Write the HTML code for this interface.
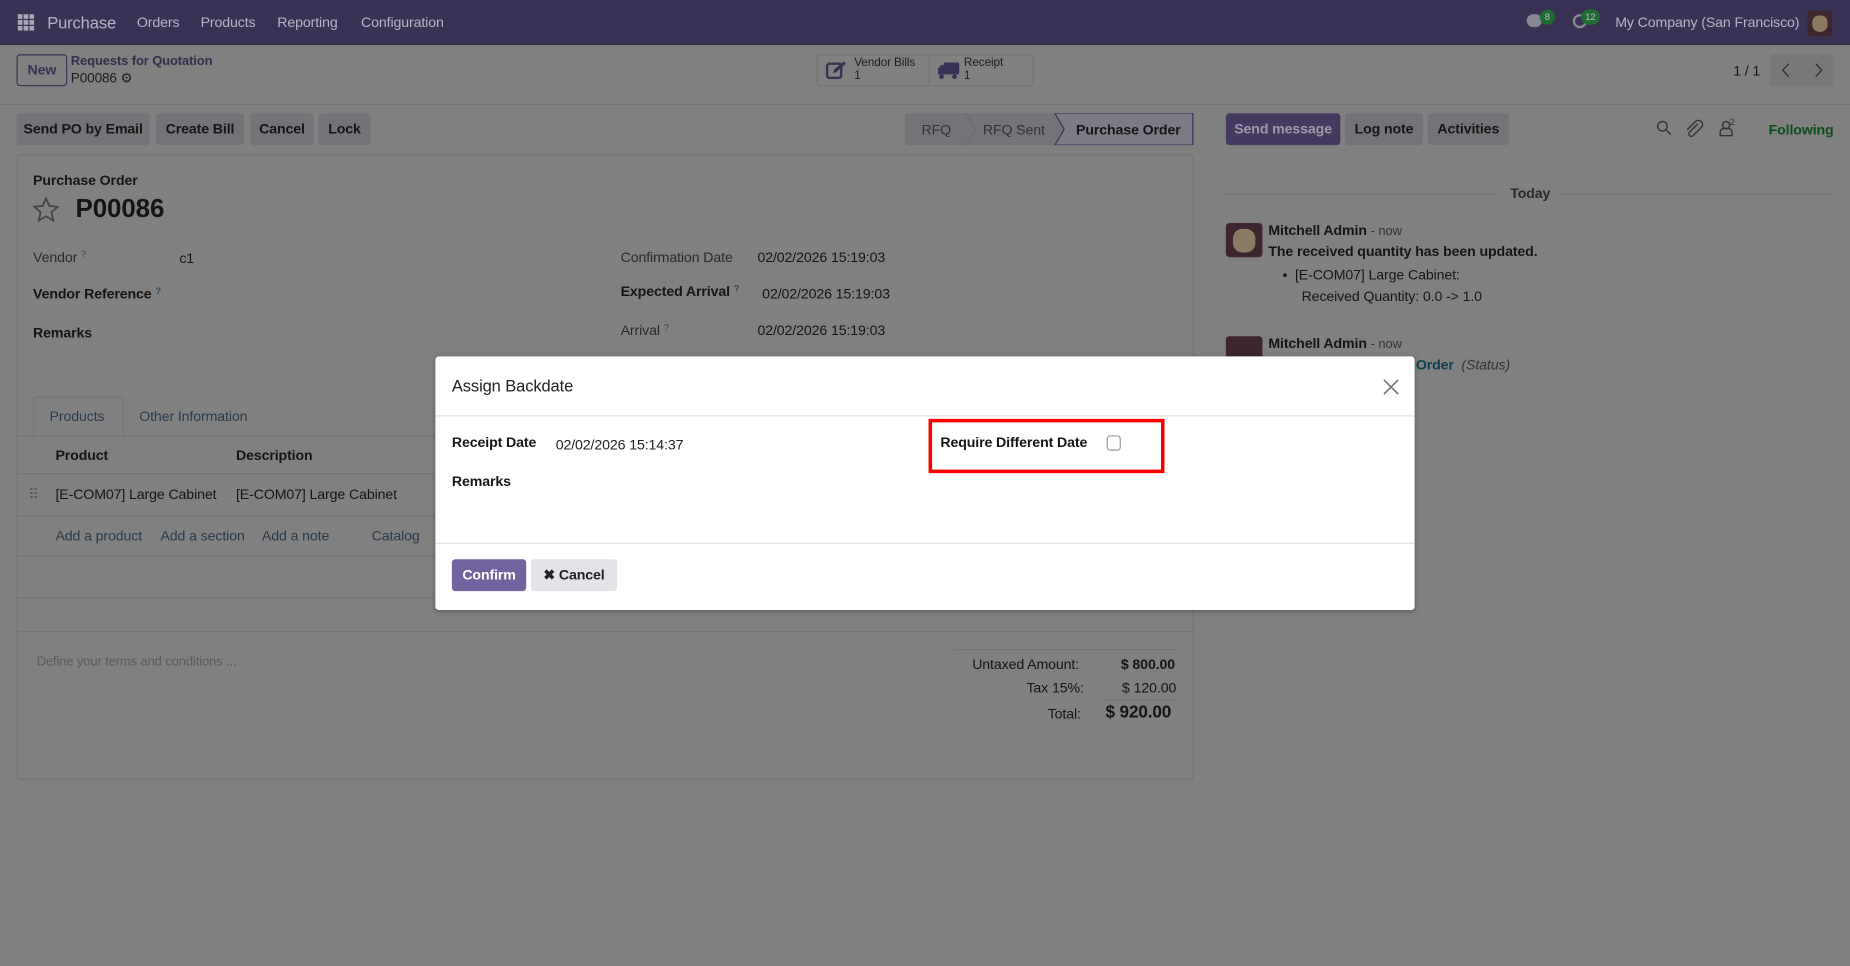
<!DOCTYPE html>
<html><head><meta charset="utf-8"><style>
*{box-sizing:border-box;margin:0;padding:0}
html,body{width:1850px;height:966px;overflow:hidden;background:#808080}
#w{position:absolute;left:0;top:0;width:1568px;height:819px;transform:scale(1.17985);transform-origin:0 0;font-family:"Liberation Sans",sans-serif;font-size:12px;color:#151515;background:#808080;letter-spacing:-0.1px}
.a{position:absolute;white-space:nowrap}
.nav{left:0;top:0;width:1568px;height:38px;background:#3a3254;border-bottom:1px solid #2e2842}
.nt{color:#b7b2c6;font-size:12px;top:12px}
.btn{position:absolute;height:27px;background:#737477;border-radius:3px;font-weight:bold;line-height:27px;text-align:center;color:#151515;font-size:12px}
.lbl{font-weight:bold}
.g{color:#2a2a2a}
.sup{font-size:8px;vertical-align:top;color:#2c4a60}
</style></head><body><div id="w">
<div class="a nav"></div>
<svg class="a" style="left:15px;top:12px" width="14" height="14" viewBox="0 0 14 14" fill="#aaa6b8"><rect x="0" y="0" width="4" height="4"/><rect x="5" y="0" width="4" height="4"/><rect x="10" y="0" width="4" height="4"/><rect x="0" y="5" width="4" height="4"/><rect x="5" y="5" width="4" height="4"/><rect x="10" y="5" width="4" height="4"/><rect x="0" y="10" width="4" height="4"/><rect x="5" y="10" width="4" height="4"/><rect x="10" y="10" width="4" height="4"/></svg>
<div class="a nt" style="left:40px;top:11px;font-size:14px">Purchase</div>
<div class="a nt" style="left:116px">Orders</div>
<div class="a nt" style="left:170px">Products</div>
<div class="a nt" style="left:235px">Reporting</div>
<div class="a nt" style="left:306px">Configuration</div>
<div class="a" style="left:1294px;top:12px;width:13px;height:11px;border-radius:6px;background:#8a8694"></div>
<div class="a" style="left:1305px;top:8px;width:13px;height:13px;border-radius:7px;background:#1d6b35;color:#bbb;font-size:8px;text-align:center;line-height:13px">8</div>
<div class="a" style="left:1333px;top:12px;width:12px;height:12px;border-radius:6px;border:2px solid #8a8694"></div>
<div class="a" style="left:1340px;top:8px;width:16px;height:13px;border-radius:7px;background:#1d6b35;color:#bbb;font-size:8px;text-align:center;line-height:13px">12</div>
<div class="a nt" style="left:1369px">My Company (San Francisco)</div>
<div class="a" style="left:1532px;top:9px;width:21px;height:22px;border-radius:3px;background:#3e2630"></div>
<div class="a" style="left:1536px;top:13px;width:13px;height:14px;border-radius:6px;background:#8b7a62"></div>

<div class="a" style="left:0;top:88px;width:1568px;height:1px;background:#747474"></div>
<div class="a" style="left:14px;top:46px;width:43px;height:27px;border:1px solid #3a3254;border-radius:3px;color:#3a3254;font-weight:bold;text-align:center;line-height:25px">New</div>
<div class="a" style="left:60px;top:46px;color:#352e4c;font-size:11px;font-weight:bold">Requests for Quotation</div>
<div class="a" style="left:60px;top:59px;color:#1c1c1c;font-size:11.5px">P00086 <span>⚙</span></div>
<div class="a" style="left:692px;top:46px;width:184px;height:27px;border:1px solid #747474;border-radius:3px"></div>
<div class="a" style="left:787px;top:46px;width:1px;height:27px;background:#747474"></div>
<svg class="a" style="left:700px;top:51px" width="18" height="17" viewBox="0 0 18 17"><rect x="1" y="3" width="12" height="12" rx="2" fill="none" stroke="#3a3254" stroke-width="2"/><path d="M6 11 L7 8 L15 1 L17 3 L9 10 Z" fill="#3a3254"/></svg>
<div class="a" style="left:724px;top:48px;font-size:10px;line-height:11px;color:#1e1e1e">Vendor Bills<br>1</div>
<svg class="a" style="left:794px;top:52px" width="20" height="16" viewBox="0 0 20 16"><rect x="6" y="1" width="13" height="10" rx="1" fill="#3a3254"/><path d="M1 6 L4 3 H7 V11 H1 Z" fill="#3a3254"/><circle cx="4" cy="13" r="2" fill="#3a3254"/><circle cx="15" cy="13" r="2" fill="#3a3254"/></svg>
<div class="a" style="left:817px;top:48px;font-size:10px;line-height:11px;color:#1e1e1e">Receipt<br>1</div>
<div class="a" style="left:1469px;top:53px">1 / 1</div>
<div class="a" style="left:1500px;top:46px;width:54px;height:27px;background:#787878;border-radius:3px"></div>
<svg class="a" style="left:1508px;top:53px" width="40" height="13" viewBox="0 0 40 13" fill="none" stroke="#333" stroke-width="1.2"><path d="M8 1 L3 6.5 L8 12"/><path d="M31 1 L36 6.5 L31 12"/></svg>

<div class="btn" style="left:14px;top:96px;width:113px">Send PO by Email</div>
<div class="btn" style="left:132px;top:96px;width:75px">Create Bill</div>
<div class="btn" style="left:212px;top:96px;width:54px">Cancel</div>
<div class="btn" style="left:270px;top:96px;width:44px">Lock</div>
<div class="a" style="left:767px;top:96px;width:245px;height:27px;background:#737477;border-radius:3px"></div>
<svg class="a" style="left:767px;top:96px" width="245" height="27"><path d="M52 0 L60 13.5 L52 27" fill="none" stroke="#6a6a6a"/><path d="M127 0 L1012 0 L244 0 L244 27 L127 27 L135 13.5 Z" fill="#7b7b85" stroke="#3a3254"/></svg>
<div class="a" style="left:781px;top:103px;color:#333">RFQ</div>
<div class="a" style="left:833px;top:103px;color:#333">RFQ Sent</div>
<div class="a" style="left:912px;top:103px;color:#151515;font-weight:bold">Purchase Order</div>
<div class="btn" style="left:1039px;top:96px;width:97px;background:#45395f;color:#9e9aac">Send message</div>
<div class="btn" style="left:1140px;top:96px;width:66px">Log note</div>
<div class="btn" style="left:1210px;top:96px;width:69px">Activities</div>
<svg class="a" style="left:1403px;top:101px" width="70" height="16" viewBox="0 0 70 16" fill="none" stroke="#333" stroke-width="1.2"><circle cx="6" cy="6" r="4"/><path d="M9 9 L13 13"/><path d="M36 4 L29 11 a2 2 0 0 0 3 3 L39 7 a3.5 3.5 0 0 0 -5 -5 L27 9"/><circle cx="60" cy="5" r="3"/><path d="M55 14 V11 a3 3 0 0 1 3 -3 H62 a3 3 0 0 1 3 3 V14 Z"/></svg>
<div class="a" style="left:1466px;top:99px;font-size:8px;color:#333">2</div>
<div class="a" style="left:1499px;top:103px;color:#0d4d1c;font-weight:bold">Following</div>

<div class="a" style="left:14px;top:131px;width:998px;height:530px;border:1px solid #747474;border-radius:3px"></div>
<div class="a" style="left:28px;top:146px;font-weight:bold">Purchase Order</div>
<svg class="a" style="left:28px;top:167px" width="22" height="21" viewBox="0 0 22 21"><path d="M11 1 L13.9 7.5 L21 8.2 L15.6 12.9 L17.2 20 L11 16.3 L4.8 20 L6.4 12.9 L1 8.2 L8.1 7.5 Z" fill="none" stroke="#444" stroke-width="1.5"/></svg>
<div class="a" style="left:64px;top:164px;font-size:22px;font-weight:bold">P00086</div>
<div class="a g" style="left:28px;top:211px">Vendor <span class="sup">?</span></div>
<div class="a" style="left:152px;top:212px">c1</div>
<div class="a lbl" style="left:28px;top:242px">Vendor Reference <span class="sup">?</span></div>
<div class="a lbl" style="left:28px;top:275px">Remarks</div>
<div class="a g" style="left:526px;top:211px">Confirmation Date</div>
<div class="a" style="left:642px;top:211px">02/02/2026 15:19:03</div>
<div class="a lbl" style="left:526px;top:240px">Expected Arrival <span class="sup">?</span></div>
<div class="a" style="left:646px;top:242px">02/02/2026 15:19:03</div>
<div class="a g" style="left:526px;top:273px">Arrival <span class="sup">?</span></div>
<div class="a" style="left:642px;top:273px">02/02/2026 15:19:03</div>
<div class="a" style="left:28px;top:336px;width:77px;height:34px;border:1px solid #747474;border-bottom:none;border-radius:3px 3px 0 0"></div>
<div class="a" style="left:14px;top:369px;width:998px;height:1px;background:#747474"></div>
<div class="a" style="left:42px;top:346px;color:#2a3a4a">Products</div>
<div class="a" style="left:118px;top:346px;color:#2a3a4a">Other Information</div>
<div class="a lbl" style="left:47px;top:379px">Product</div>
<div class="a lbl" style="left:200px;top:379px">Description</div>
<div class="a" style="left:14px;top:401px;width:998px;height:1px;background:#747474"></div>
<div class="a" style="left:24px;top:412px;color:#555">⠿</div>
<div class="a" style="left:47px;top:412px">[E-COM07] Large Cabinet</div>
<div class="a" style="left:200px;top:412px">[E-COM07] Large Cabinet</div>
<div class="a" style="left:14px;top:437px;width:998px;height:1px;background:#747474"></div>
<div class="a" style="left:47px;top:447px;color:#2a3a4a">Add a product</div>
<div class="a" style="left:136px;top:447px;color:#2a3a4a">Add a section</div>
<div class="a" style="left:222px;top:447px;color:#2a3a4a">Add a note</div>
<div class="a" style="left:315px;top:447px;color:#2a3a4a">Catalog</div>
<div class="a" style="left:14px;top:471px;width:998px;height:1px;background:#747474"></div>
<div class="a" style="left:14px;top:506px;width:998px;height:1px;background:#747474"></div>
<div class="a" style="left:14px;top:535px;width:998px;height:1px;background:#747474"></div>
<div class="a" style="left:31px;top:555px;color:#5a5a5a;font-size:11px">Define your terms and conditions ...</div>
<div class="a" style="left:808px;top:550px;width:190px;height:1px;background:#747474"></div>
<div class="a" style="left:824px;top:556px">Untaxed Amount:</div>
<div class="a lbl" style="left:950px;top:556px">$ 800.00</div>
<div class="a" style="left:870px;top:576px">Tax 15%:</div>
<div class="a" style="left:951px;top:576px">$ 120.00</div>
<div class="a" style="left:936px;top:593px;width:62px;height:1px;background:#747474"></div>
<div class="a" style="left:888px;top:598px">Total:</div>
<div class="a lbl" style="left:937px;top:596px;font-size:14.5px">$ 920.00</div>

<div class="a" style="left:1039px;top:164px;width:230px;height:1px;background:#747474"></div>
<div class="a" style="left:1322px;top:164px;width:232px;height:1px;background:#747474"></div>
<div class="a lbl" style="left:1280px;top:157px;color:#2a2a2a">Today</div>
<div class="a" style="left:1039px;top:189px;width:31px;height:29px;border-radius:3px;background:#3e2630"></div>
<div class="a" style="left:1045px;top:194px;width:19px;height:20px;border-radius:8px;background:#8b7a62"></div>
<div class="a lbl" style="left:1075px;top:188px">Mitchell Admin <span style="font-weight:normal;color:#333;font-size:11px">- now</span></div>
<div class="a lbl" style="left:1075px;top:206px">The received quantity has been updated.</div>
<div class="a" style="left:1087px;top:224px;line-height:18px">•&nbsp;&nbsp;[E-COM07] Large Cabinet:<br>&nbsp;&nbsp;&nbsp;&nbsp;&nbsp;Received Quantity: 0.0 -&gt; 1.0</div>
<div class="a" style="left:1039px;top:285px;width:31px;height:29px;border-radius:3px;background:#3e2630"></div>
<div class="a lbl" style="left:1075px;top:284px">Mitchell Admin <span style="font-weight:normal;color:#333;font-size:11px">- now</span></div>
<div class="a" style="left:1200px;top:302px;color:#0c3f4f;font-weight:bold">Order &nbsp;<i style="font-weight:normal;color:#333">(Status)</i></div>

<div class="a" style="left:369px;top:302px;width:830px;height:215px;background:#fff;border-radius:3px;box-shadow:0 1px 4px rgba(0,0,0,.3)">
 <div class="a" style="left:14px;top:17px;font-size:14px;color:#222">Assign Backdate</div>
 <svg class="a" style="left:803px;top:19px" width="14" height="14" viewBox="0 0 14 14" stroke="#777" stroke-width="1.4"><path d="M1 1 L13 13 M13 1 L1 13"/></svg>
 <div class="a" style="left:0;top:50px;width:830px;height:1px;background:#dee2e6"></div>
 <div class="a lbl" style="left:14px;top:66px">Receipt Date</div>
 <div class="a" style="left:102px;top:68px;color:#222">02/02/2026 15:14:37</div>
 <div class="a lbl" style="left:14px;top:99px">Remarks</div>
 <div class="a" style="left:418px;top:53px;width:200px;height:46px;border:3px solid #f00"></div>
 <div class="a lbl" style="left:428px;top:66px">Require Different Date</div>
 <div class="a" style="left:569px;top:67px;width:12px;height:13px;border:1px solid #999;border-radius:3px"></div>
 <div class="a" style="left:0;top:158px;width:830px;height:1px;background:#dee2e6"></div>
 <div class="btn" style="left:14px;top:172px;width:63px;background:#71639e;color:#fff">Confirm</div>
 <div class="btn" style="left:81px;top:172px;width:73px;background:#e1e3e6;color:#222">✖ Cancel</div>
</div>
</div></body></html>
